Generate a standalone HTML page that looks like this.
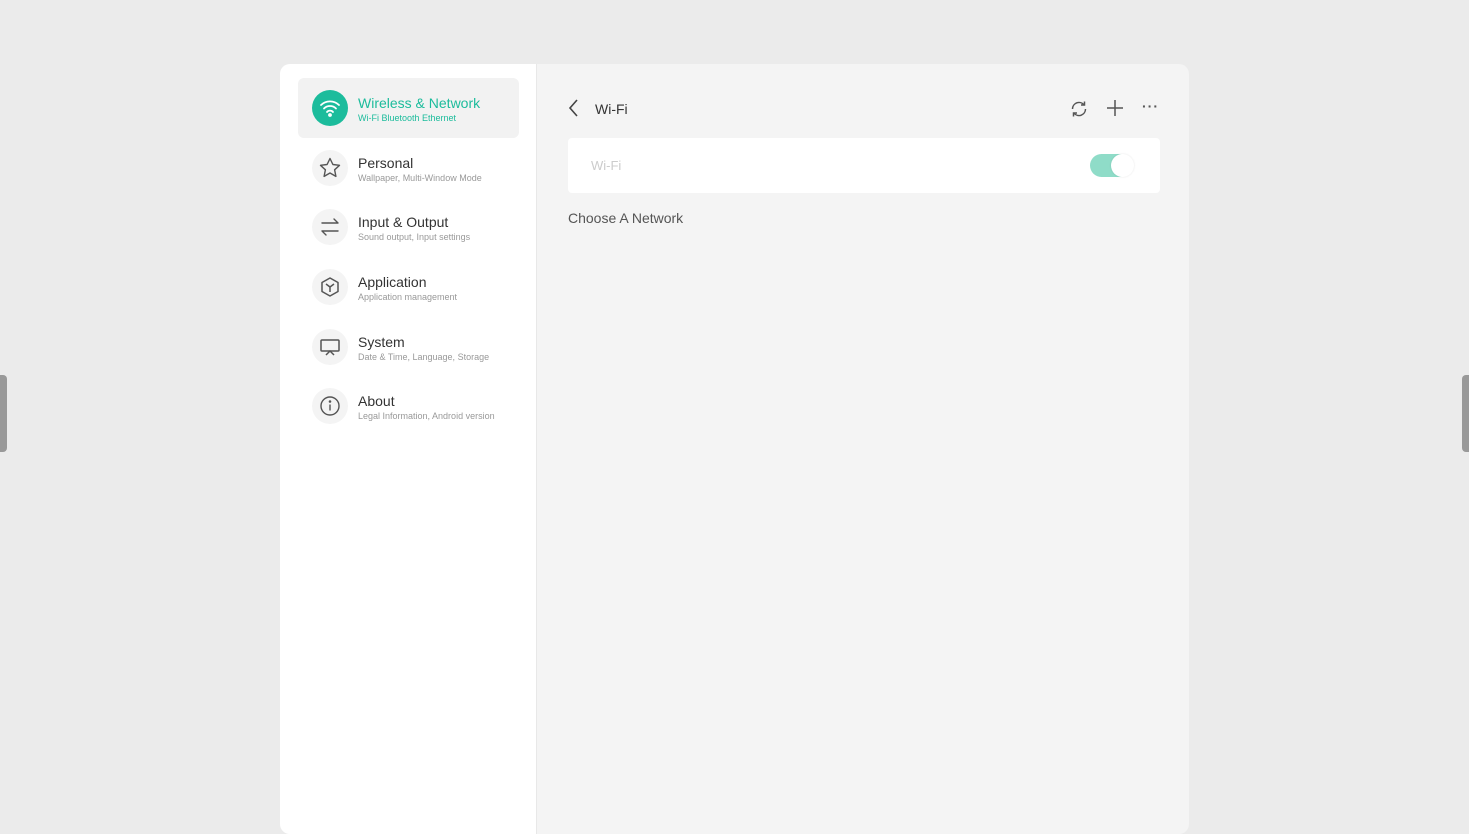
<!DOCTYPE html>
<html><head><style>
*{margin:0;padding:0;box-sizing:border-box}
body{width:1469px;height:826px;background:#ebebeb;font-family:"Liberation Sans",sans-serif;position:relative;overflow:hidden}
.card{position:absolute;left:280px;top:64px;width:909px;height:770px;border-radius:10px;background:#f4f4f4;overflow:hidden}
.side{position:absolute;left:0;top:0;width:257px;height:100%;background:#fff;border-right:1px solid #e8e8e8}
.item{position:absolute;left:18px;width:221px;height:60px;border-radius:6px}
.item.sel{background:#f2f2f2}
.ic{position:absolute;left:14px;top:12px;width:36px;height:36px;border-radius:50%;background:#f4f4f4;display:flex;align-items:center;justify-content:center}
.t{position:absolute;left:60px;top:17px;font-size:14px;color:#333}
.s{position:absolute;left:60px;top:35px;font-size:9px;color:#999}
.tab{position:absolute;top:375px;width:7px;height:77px;background:#999;border-radius:0 4px 4px 0}
</style></head><body>
<div class="tab" style="left:0"></div>
<div class="tab" style="right:0;border-radius:4px 0 0 4px"></div>
<div class="card">
<div class="side">
<div class="item sel" style="top:14px"><div class="ic" style="background:#1cbc9c"><svg width="22" height="22" viewBox="0 0 22 22" fill="none" stroke="#fff" stroke-width="1.8" stroke-linecap="round"><path d="M2 8a13 13 0 0 1 18 0M5 11.5a8.5 8.5 0 0 1 12 0M8 15a4 4 0 0 1 6 0"/><circle cx="11" cy="18" r="1" fill="#fff"/></svg></div><div class="t" style="color:#1cbc9c">Wireless &amp; Network</div><div class="s" style="color:#1cbc9c">Wi-Fi Bluetooth Ethernet</div></div>
<div class="item" style="top:74px"><div class="ic"><svg width="24" height="24" viewBox="0 0 24 24" fill="none" stroke="#555" stroke-width="1.4" stroke-linejoin="round"><path d="M12 2.5l2.9 6 6.6.8-4.9 4.5 1.3 6.6L12 17l-5.9 3.4 1.3-6.6L2.5 9.3l6.6-.8z"/></svg></div><div class="t">Personal</div><div class="s">Wallpaper, Multi-Window Mode</div></div>
<div class="item" style="top:133px"><div class="ic"><svg width="22" height="22" viewBox="0 0 22 22" fill="none" stroke="#555" stroke-width="1.4" stroke-linecap="round"><path d="M3 7h16M15 3l4 4M19 15H3M7 19l-4-4"/></svg></div><div class="t">Input &amp; Output</div><div class="s">Sound output, Input settings</div></div>
<div class="item" style="top:193px"><div class="ic"><svg width="22" height="22" viewBox="0 0 22 22" fill="none" stroke="#555" stroke-width="1.5" stroke-linejoin="round"><path d="M11 2l8 4.5v9L11 20l-8-4.5v-9z"/><path d="M7 8l4 3 4-3M11 11v5"/></svg></div><div class="t">Application</div><div class="s">Application management</div></div>
<div class="item" style="top:253px"><div class="ic"><svg width="22" height="22" viewBox="0 0 22 22" fill="none" stroke="#555" stroke-width="1.5"><rect x="2" y="4" width="18" height="11" rx="1"/><path d="M7 19l4-4 4 4"/></svg></div><div class="t">System</div><div class="s">Date &amp; Time, Language, Storage</div></div>
<div class="item" style="top:312px"><div class="ic"><svg width="22" height="22" viewBox="0 0 22 22" fill="none" stroke="#555" stroke-width="1.4"><circle cx="11" cy="11" r="9"/><path d="M11 9.5v6"/><circle cx="11" cy="6.5" r=".6" fill="#555"/></svg></div><div class="t">About</div><div class="s">Legal Information, Android version</div></div>
</div>
<svg style="position:absolute;left:287px;top:35px" width="14" height="18" viewBox="0 0 14 18" fill="none" stroke="#444" stroke-width="1.6"><path d="M10 1L3 9l7 8"/></svg>
<div style="position:absolute;left:315px;top:37px;font-size:14px;color:#333">Wi-Fi</div>
<svg style="position:absolute;left:789px;top:35px" width="20" height="20" viewBox="0 0 20 20" fill="none" stroke="#555" stroke-width="1.5"><path d="M3.5 10a6.5 6.5 0 0 1 11.5-4.2M16.5 10a6.5 6.5 0 0 1-11.5 4.2"/><path d="M15.5 2.5v3.5H12M4.5 17.5V14H8"/></svg>
<svg style="position:absolute;left:826px;top:35px" width="18" height="18" viewBox="0 0 18 18" stroke="#555" stroke-width="1.5"><path d="M9 1v16M1 9h16"/></svg>
<div style="position:absolute;left:862px;top:34px;font-size:14px;color:#555;letter-spacing:1px;font-weight:bold">···</div>
<div style="position:absolute;left:288px;top:74px;width:592px;height:55px;background:#fff;border-radius:4px">
<div style="position:absolute;left:23px;top:20px;font-size:13px;color:#ccc">Wi-Fi</div>
<div style="position:absolute;left:522px;top:16px;width:40px;height:23px;border-radius:12px;background:#8fdcc8"></div>
<div style="position:absolute;left:543px;top:16px;width:23px;height:23px;border-radius:50%;background:#fff;box-shadow:0 0 2px rgba(0,0,0,.1)"></div>
</div>
<div style="position:absolute;left:288px;top:146px;font-size:14px;color:#555">Choose A Network</div>
</div>
</body></html>
